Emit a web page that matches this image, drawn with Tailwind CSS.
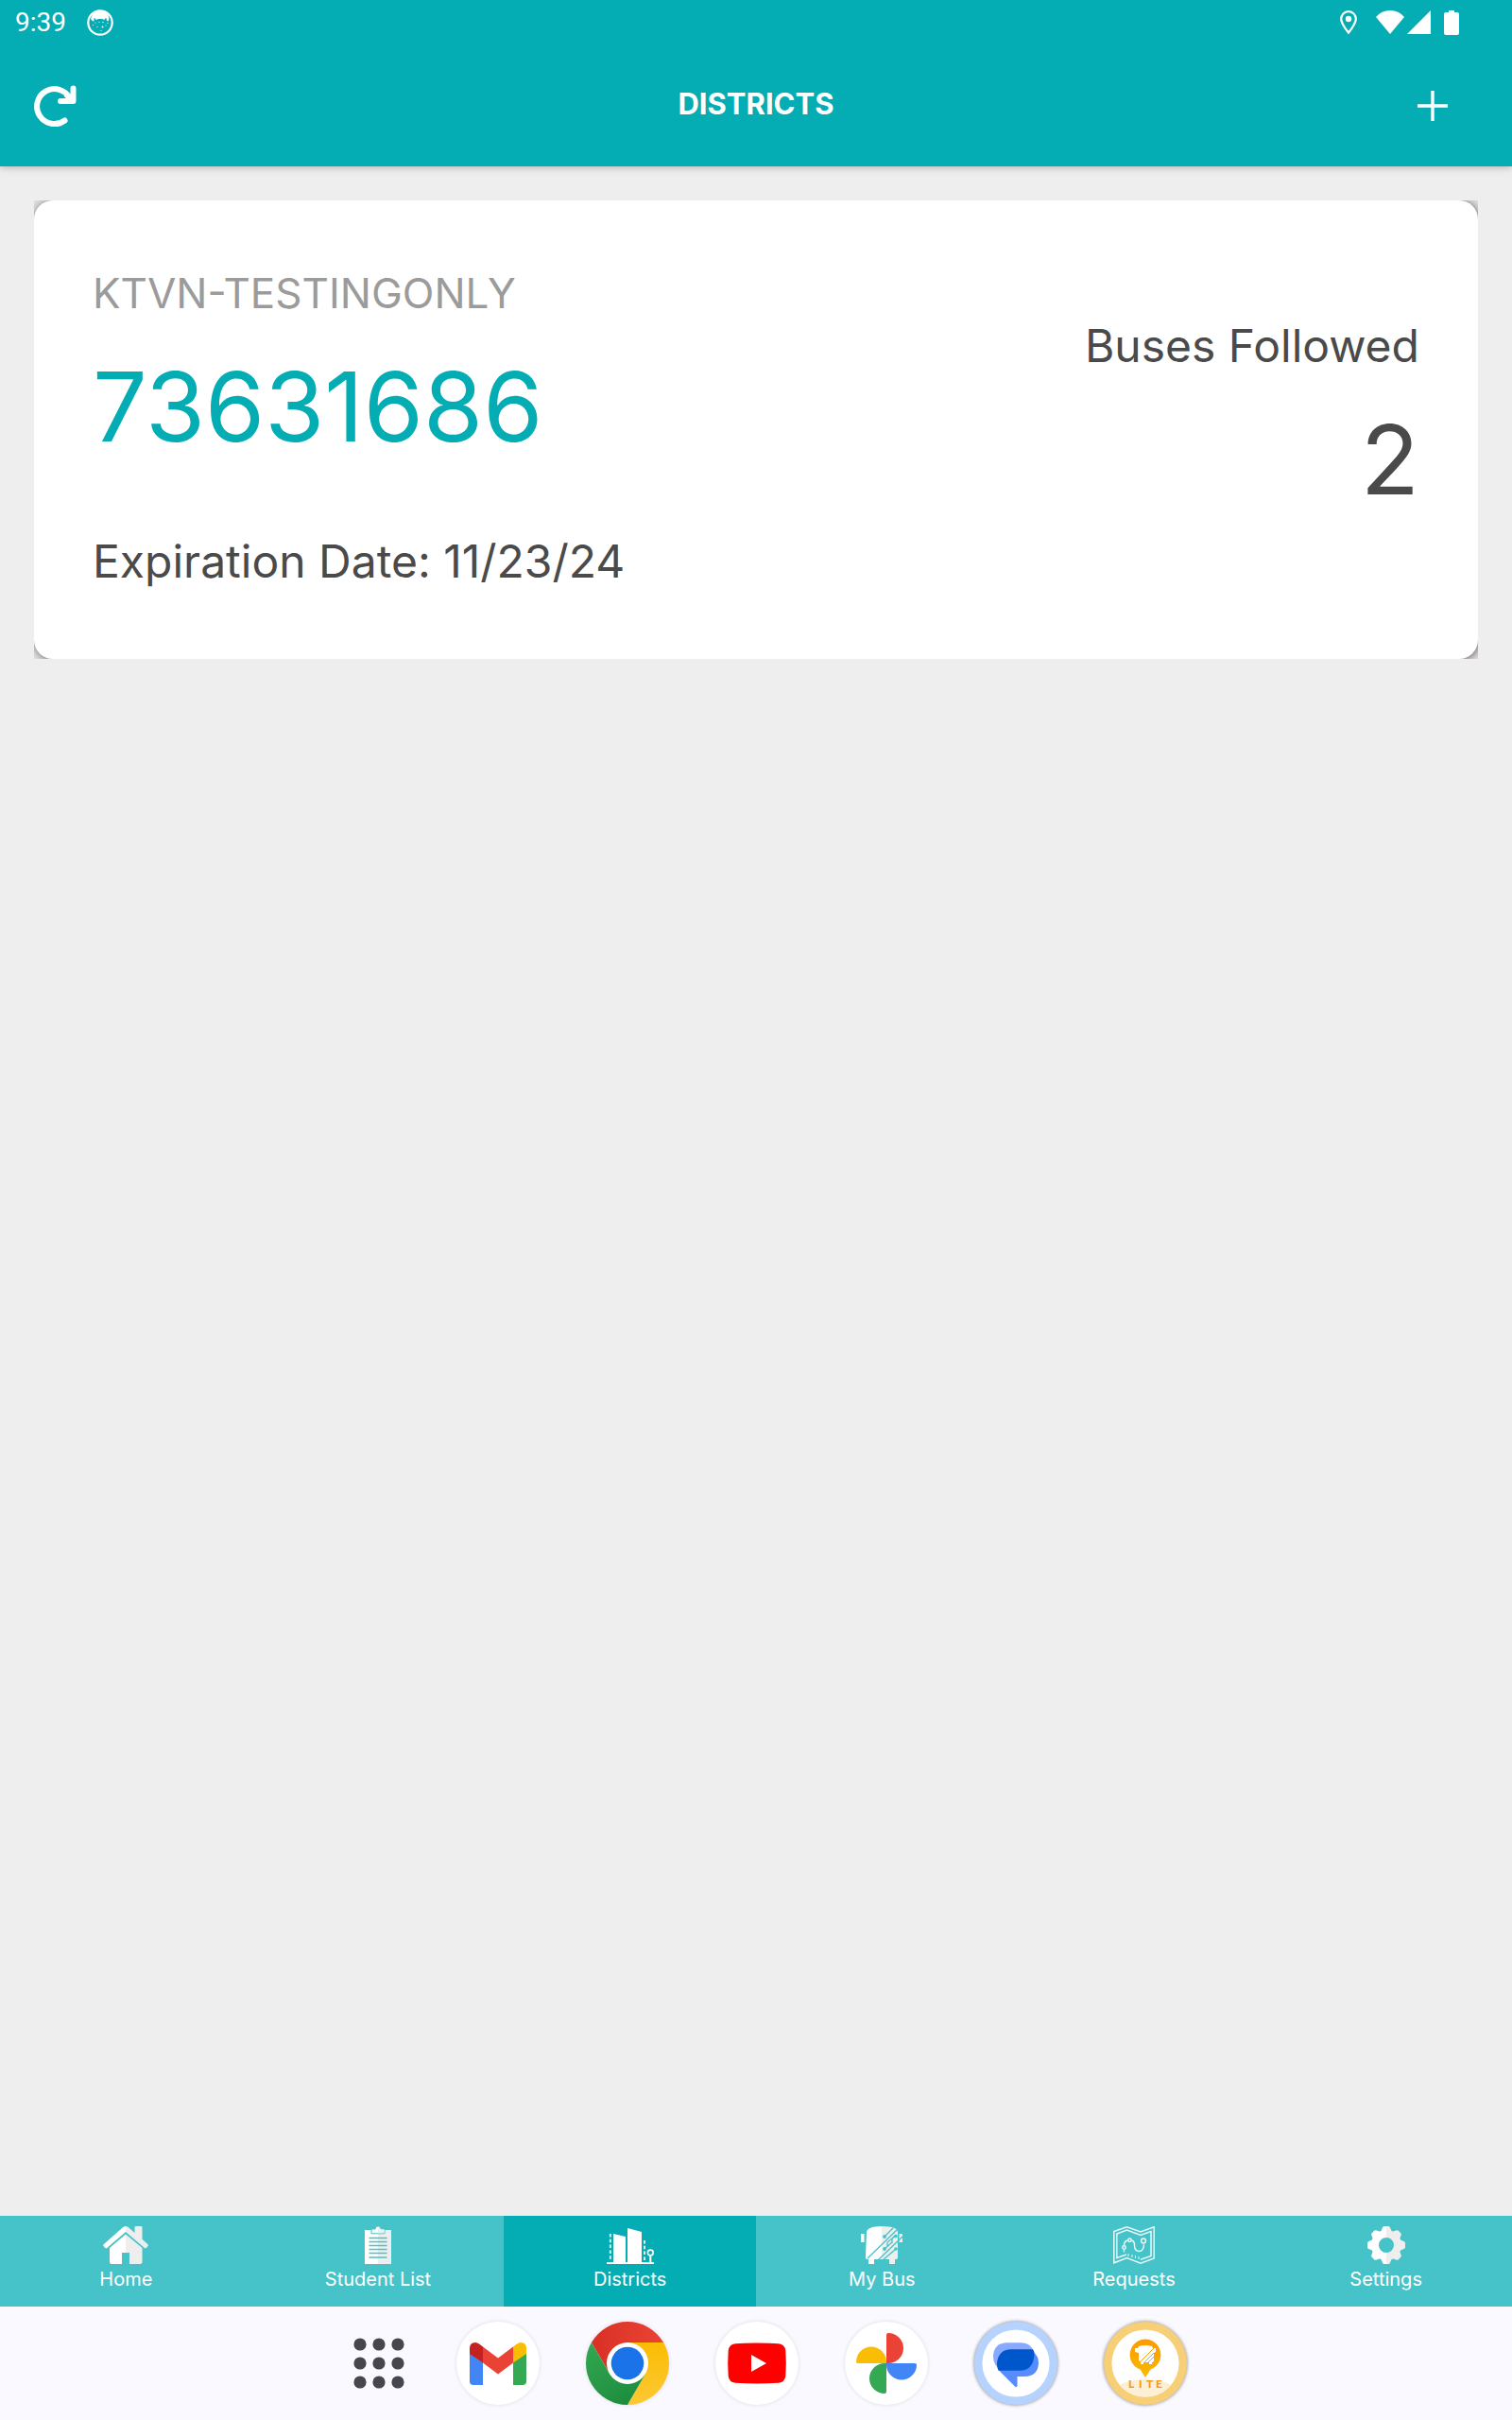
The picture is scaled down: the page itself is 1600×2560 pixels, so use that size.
<!DOCTYPE html>
<html lang="en">
<head>
    <meta charset="UTF-8">
    <meta name="viewport" content="width=device-width, initial-scale=1.0">
    <title>Districts</title>
    <script src="https://cdn.jsdelivr.net/npm/@tailwindcss/browser@4"></script>
</head>
<body class="min-h-screen flex flex-col bg-[#eeeeee] font-['Inter',sans-serif] text-[#4a4a4a]">
<header class="relative z-10 bg-[#03adb3] text-white shadow-[0_1px_8px_rgba(0,0,0,0.25)]">
    <!-- status bar -->
    <div class="h-12 flex items-center justify-between pl-4 pr-14 font-['Roboto',sans-serif]">
        <div class="flex items-center gap-[22px]">
            <span class="text-[28px] leading-8">9:39</span>
            <svg class="w-7 h-7" viewBox="0 0 28 28">
                <circle cx="14" cy="14" r="12.7" fill="none" stroke="white" stroke-width="2.200"/>
                <path d="M5 7Q8 1.500 14 1.500T23 7Q24 10 22.500 12.500 20.500 12.500 20.500 9 19 9 18.500 11 16 9.500 14 10 12 9.500 9.500 11 9 9 7.500 9 7.500 9 7.500 12.500 5.500 12.500 4 10 5 7Z" fill="white"/>
                <g fill="white"><circle cx="9" cy="14" r=".6"/><circle cx="13" cy="13.500" r=".6"/><circle cx="17" cy="13.500" r=".7"/><circle cx="22" cy="14.500" r=".6"/><circle cx="6.500" cy="16.500" r=".6"/><circle cx="11" cy="18.500" r=".6"/><circle cx="16.500" cy="18.500" r=".9"/><circle cx="20" cy="17" r=".6"/><circle cx="15" cy="22.500" r=".6"/></g>
            </svg>
        </div>
        <div class="flex items-center">
            <svg class="w-[18px] h-[26px] mr-5" viewBox="0 0 18 26">
                <path d="M9 1.200C4.600 1.200 1.200 4.600 1.200 9c0 5 4.200 10 7.800 14.600C12.600 19 16.800 14 16.800 9c0-4.400-3.400-7.800-7.800-7.800Z" fill="none" stroke="white" stroke-width="2.200"/>
                <circle cx="9" cy="9" r="3.200" fill="white"/>
            </svg>
            <svg class="w-[30px] h-[26px] mr-[3px]" viewBox="0 0 30 26"><path d="M15 25 0 7Q6 0 15 0T30 7Z" fill="white"/></svg>
            <svg class="w-[25px] h-[26px] mr-3.5" viewBox="0 0 25 26"><path d="M25 0V25H0Z" fill="white"/></svg>
            <svg class="w-4 h-[26px]" viewBox="0 0 16 26"><path d="M5 0h6v2h3q2 0 2 2v20q0 2-2 2H2q-2 0-2-2V4q0-2 2-2h3Z" fill="white"/></svg>
        </div>
    </div>
    <!-- app bar -->
    <div class="h-32 grid grid-cols-3 items-start pt-10 px-9">
        <button type="button" aria-label="Refresh" class="w-12 h-12">
            <svg class="w-12 h-12" viewBox="0 0 48 48" fill="none" stroke="white" stroke-width="6" stroke-linecap="round" stroke-linejoin="round">
                <path d="M32.500 39.500A18.500 18.500 0 1 1 38 16"/>
                <path d="M41.500 5.500V19H28"/>
                <path d="M35 13l5 5"/>
            </svg>
        </button>
        <h1 class="text-[31px] leading-11 font-bold text-center">DISTRICTS</h1>
        <button type="button" aria-label="Add district" class="justify-self-end w-12 h-12 mr-6 flex justify-center">
            <svg class="w-8 h-12" viewBox="0 0 32 48" stroke="white" stroke-width="3.400"><path d="M16 8v32M0 24h32"/></svg>
        </button>
    </div>
</header>

<main class="grow p-9">
    <div class="bg-[#e2e2e2] overflow-hidden">
        <a href="#district" class="flex justify-between rounded-[20px] bg-white px-[62px] pt-[70px] pb-[75px] shadow-[1px_1px_10px_rgba(60,40,40,0.7)]">
            <div>
                <p class="text-[44px] leading-14 text-[#9b9b9b]">KTVN-TESTINGONLY</p>
                <p class="mt-8 text-[102px] leading-30 text-[#03adb3]">73631686</p>
                <p class="mt-[76px] text-[48px] leading-14">Expiration Date: 11/23/24</p>
            </div>
            <div class="pt-14 text-right">
                <p class="text-[48px] leading-14">Buses Followed</p>
                <p class="mt-8 text-[102px] leading-30">2</p>
            </div>
        </a>
    </div>
</main>

<nav class="grid grid-cols-6 h-24 bg-[#46c3c8] text-white text-[20px] leading-8">
    <a href="#home" class="flex flex-col items-center pt-[11px]">
        <svg class="w-12 h-10" viewBox="0 0 48 40">
            <path d="M24 8.500 7 23v14.500Q7 40 9.500 40H20V28h4Z" fill="white"/>
            <path d="M24 8.500 41.500 23v14.500Q41.500 40 39 40H28V28h-4Z" fill="#eee"/>
            <path d="M24 0Q22.500 0 21 1.300L.6 19.300q-.8.800 0 1.800l1.800 2q.9.800 1.800 0L24 6Z" fill="white"/>
            <path d="M24 0q1.500 0 3 1.300l6.500 5.600V1.200Q33.500 0 35 0h5q1.500 0 1.500 1.200v12.600l6 5.500q.8.800 0 1.800l-1.800 2q-.9.800-1.800 0L24 6Z" fill="#eee"/>
        </svg>
        <span>Home</span>
    </a>
    <a href="#students" class="flex flex-col items-center pt-[11px]">
        <svg class="w-7 h-10" viewBox="0 0 28 40">
            <path d="M0 4h14v36H0Z" fill="white"/>
            <path d="M14 4h14v36H14Z" fill="#eee"/>
            <path d="M7 7.800V3h4q0-3 3-3t3 3h4v4.800Z" fill="white" stroke="#46c3c8" stroke-width="1"/>
            <path d="M14 .5q2.500 0 2.500 3h4v3.800H14Z" fill="#eee"/>
            <path d="M4.500 12.500h19M4.500 16.500h19M4.500 20.500h19M4.500 24.500h19M4.500 28.500h19M4.500 33h19" stroke="#46c3c8" stroke-width="1.400"/>
        </svg>
        <span>Student List</span>
    </a>
    <a href="#districts" aria-current="page" class="flex flex-col items-center pt-[11px] bg-[#03adb3]">
        <svg class="w-[50px] h-10" viewBox="0 0 50 40">
            <path d="M7 8l13 3v27H7ZM22 2l15 4v32H22ZM0 38h50v2H0Z" fill="white"/>
            <path d="M3.800 8v28M40 15v22" stroke="white" stroke-width="1.800" stroke-dasharray="3.500 2.300"/>
            <circle cx="46.300" cy="28" r="2.900" fill="none" stroke="white" stroke-width="1.600"/>
            <path d="M46.300 31v8" stroke="white" stroke-width="2"/>
        </svg>
        <span>Districts</span>
    </a>
    <a href="#bus" class="flex flex-col items-center pt-[11px]">
        <svg class="w-11 h-10" viewBox="0 0 44 40">
            <path d="M22 0v35h-8v5H8v-5q-3 0-3-2L6 6q.5-3 5-4.500Q15 0 22 0ZM0 8h3.500v9H0Z" fill="white"/>
            <path d="M22 0v35h8v5h6v-5q3 0 3-2V6q-.5-3-5-4.500Q30 0 22 0ZM40.500 8H44v9h-3.500Z" fill="#eee"/>
            <g stroke="#46c3c8" stroke-width="1.300" fill="none"><path d="M7 34 38 4M18 36 44 11M23 36l14-12M25 11l9-9M28 22v-5l9-7M33 18v-5l4-4M25 24l8-7"/></g>
            <g fill="#46c3c8"><circle cx="25" cy="11" r="1.900"/><circle cx="37" cy="10.500" r="1.700"/><circle cx="25" cy="24" r="1.900"/><circle cx="37" cy="24" r="1.800"/></g>
        </svg>
        <span>My Bus</span>
    </a>
    <a href="#requests" class="flex flex-col items-center pt-[11px]">
        <svg class="w-11 h-10" viewBox="0 0 44 40" fill="none" stroke="#e9f8f8" stroke-width="1.500">
            <path d="M.8 5.500 14.500.8 29 6 43.200.8V34L29 39.200 14.500 33.500.8 38.800Z"/>
            <path d="M14 30 3.800 33.500V8L14.500 4 29 9.500l11-4V31.500L29 35.200"/>
            <path d="M16 29v3M20 30v3M23.500 31v3M27 32v3" stroke-width="1"/>
            <circle cx="11.500" cy="22.500" r="1.700"/>
            <circle cx="17.500" cy="14.800" r="1.700"/>
            <circle cx="32" cy="15.500" r="2.400"/>
            <path d="M11.500 25v2.500M11.500 20.500q0-5 4-5.500M19.500 15q3.500 1 3 6 .5 5.500 5 5.500t5-7"/>
        </svg>
        <span>Requests</span>
    </a>
    <a href="#settings" class="flex flex-col items-center pt-[11px]">
        <svg class="w-10 h-10" viewBox="0 0 40 40">
            <g fill="white">
                <path d="M20 4A16 16 0 0 0 20 36V28A8 8 0 0 1 20 12Z"/>
                <path d="M20 0h-2.500q-1 0-1.500 1.500L14 6H20Z"/>
                <path d="M20 40h-2.500q-1 0-1.500-1.500L14 34H20Z"/>
                <path d="M6 14 1.500 16Q0 16.500 0 17.500v5q0 1 1.500 1.500L6 26Z"/>
                <path d="M14 6 9 4.200Q8 4 7.200 4.800L4.800 7.200Q4 8 4.200 9L6 14Z"/>
                <path d="M14 34 9 35.800q-1 .2-1.800-.6l-2.400-2.400Q4 32 4.200 31L6 26Z"/>
            </g>
            <g fill="#eee">
                <path d="M20 4A16 16 0 0 1 20 36V28A8 8 0 0 0 20 12Z"/>
                <path d="M20 0h2.500q1 0 1.500 1.500L26 6H20Z"/>
                <path d="M20 40h2.500q1 0 1.500-1.500L26 34H20Z"/>
                <path d="M34 14l4.500 2q1.500.5 1.500 1.500v5q0 1-1.500 1.500L34 26Z"/>
                <path d="M26 6 31 4.200q1-.2 1.800.6l2.400 2.400q.8.800.6 1.800L34 14Z"/>
                <path d="M26 34 31 35.800q1 .2 1.800-.6l2.400-2.400q.8-.8.6-1.800L34 26Z"/>
            </g>
        </svg>
        <span>Settings</span>
    </a>
</nav>

<!-- dock -->
<footer class="h-30 flex items-center justify-center gap-[49px] pl-6 bg-[#faf9ff]">
    <button type="button" aria-label="All apps" class="w-[66px] flex justify-center">
        <svg class="w-[54px] h-[54px]" viewBox="0 0 54 54" fill="#46464f">
            <circle cx="7" cy="7" r="6.600"/><circle cx="27" cy="7" r="6.600"/><circle cx="47" cy="7" r="6.600"/>
            <circle cx="7" cy="27" r="6.600"/><circle cx="27" cy="27" r="6.600"/><circle cx="47" cy="27" r="6.600"/>
            <circle cx="7" cy="47" r="6.600"/><circle cx="27" cy="47" r="6.600"/><circle cx="47" cy="47" r="6.600"/>
        </svg>
    </button>
    <button type="button" aria-label="Gmail" class="w-22 h-22 rounded-full bg-white shadow-[0_0_4px_rgba(0,0,0,0.12)]">
        <svg viewBox="0 0 88 88">
            <path d="M14 32h14v35H18q-4 0-4-4Z" fill="#4285f4"/>
            <path d="M60 32h14v31q0 4-4 4H60Z" fill="#34a853"/>
            <path d="M28 26.500l16 12 16-12v17L44 55.500 28 43.500Z" fill="#ea4335"/>
            <path d="M14 34v-6q0-6 6-6 2 0 4 1.500l4 3v17Z" fill="#c5221f"/>
            <path d="M74 34v-6q0-6-6-6-2 0-4 1.500l-4 3v17Z" fill="#fbbc04"/>
        </svg>
    </button>
    <button type="button" aria-label="Chrome" class="w-22 h-22 rounded-full shadow-[0_0_4px_rgba(0,0,0,0.12)]">
        <svg viewBox="0 0 88 88">
            <defs>
                <linearGradient id="red"><stop stop-color="#d93025"/><stop offset="1" stop-color="#ea4335"/></linearGradient>
                <linearGradient id="yellow" x2="0" y2="1"><stop stop-color="#fbbc04"/><stop offset="1" stop-color="#fcc934"/></linearGradient>
                <linearGradient id="green" x2=".6" y2="1"><stop stop-color="#34a853"/><stop offset="1" stop-color="#1e8e3e"/></linearGradient>
            </defs>
            <path d="M44 22H82.100A44 44 0 0 0 5.900 22L25 55 44 44Z" fill="url(#red)"/>
            <path d="M44 88A44 44 0 0 0 82.100 22H44V44L63 55Z" fill="url(#yellow)"/>
            <path d="M5.900 22A44 44 0 0 0 44 88L63.100 55 44 44 25 55Z" fill="url(#green)"/>
            <circle cx="44" cy="44" r="22" fill="white"/>
            <circle cx="44" cy="44" r="17.300" fill="#1a73e8"/>
        </svg>
    </button>
    <button type="button" aria-label="YouTube" class="w-22 h-22 rounded-full bg-white shadow-[0_0_4px_rgba(0,0,0,0.12)]">
        <svg viewBox="0 0 88 88">
            <path d="M44 22.500q14 0 23 .7 6.500.8 7.300 7.300 1 13.500 0 27-.8 6.500-7.300 7.300-23 1.400-46 0-6.500-.8-7.300-7.300-1-13.500 0-27 .8-6.500 7.300-7.300 9-.7 23-.7Z" fill="red"/>
            <path d="M38 35v18l16-9Z" fill="white"/>
        </svg>
    </button>
    <button type="button" aria-label="Photos" class="w-22 h-22 rounded-full bg-white shadow-[0_0_4px_rgba(0,0,0,0.12)]">
        <svg viewBox="0 0 88 88">
            <path d="M44 44V14q0-2 2-2a16 16 0 0 1 0 32Z" fill="#ea4335"/>
            <path d="M44 44h30q2 0 2 1.500a16 16 0 0 1-32 0Z" fill="#4285f4"/>
            <path d="M44 44v30q0 2-2 2a16 16 0 0 1 0-32Z" fill="#34a853"/>
            <path d="M44 44H14q-2 0-2-1.500a16 16 0 0 1 32 0Z" fill="#fbbc04"/>
        </svg>
    </button>
    <button type="button" aria-label="Messages" class="w-22 h-22 rounded-full bg-[#b5d3fe] shadow-[0_0_3px_1px_rgba(0,0,0,0.3)]">
        <svg viewBox="0 0 88 88">
            <circle cx="44" cy="44" r="35.600" fill="white"/>
            <path d="M35 22.300H50Q60 22.300 63.500 33L28 51Q20 46 20 37 20.500 22.300 35 22.300Z" fill="#87a9ff"/>
            <path d="M63.500 33Q68 37 68 43.500 67.500 58 53 58H45.500V68Q45 70 43 68.500L27.500 53Q24 49 24 45Z" fill="#578cff"/>
            <path d="M39 29.300H62Q63.500 31 63.500 35 62.500 51.700 48 51.700H25.500Q24 49 24 44 25.500 29.300 39 29.300Z" fill="#0057cc"/>
        </svg>
    </button>
    <button type="button" aria-label="Lite" class="w-22 h-22 rounded-full bg-[#f6cf77] shadow-[0_0_3px_1px_rgba(0,0,0,0.3)]">
        <svg viewBox="0 0 88 88">
            <defs>
                <linearGradient id="pin" x2="0" y2="1"><stop stop-color="#fe9a00"/><stop offset="1" stop-color="#f5bb00"/></linearGradient>
                <clipPath id="disc"><circle cx="44" cy="44" r="35.600"/></clipPath>
            </defs>
            <circle cx="44" cy="44" r="35.600" fill="white"/>
            <ellipse cx="44" cy="82" rx="40" ry="21" fill="#fdefd5" clip-path="url(#disc)"/>
            <path d="M44 18.500A16.500 16.500 0 0 0 38.500 50.500L44 59 49.500 50.500A16.500 16.500 0 0 0 44 18.500Z" fill="url(#pin)"/>
            <path d="M37 26q7-2 14 0l1 2h3v4l-2 1v9l-2 1v2h-3v-2h-6v2h-3v-2l-2-2V33l-4-1V28h3Z" fill="white"/>
            <path d="M38 43 53 28M43 43l10-10M47 43l7-7" stroke="#fba300" stroke-width="1"/>
            <text x="26 37 45 55" y="70" font-family="Lato, sans-serif" font-size="12" font-weight="900" fill="#f09e1c">LITE</text>
        </svg>
    </button>
</footer>
</body>
</html>
